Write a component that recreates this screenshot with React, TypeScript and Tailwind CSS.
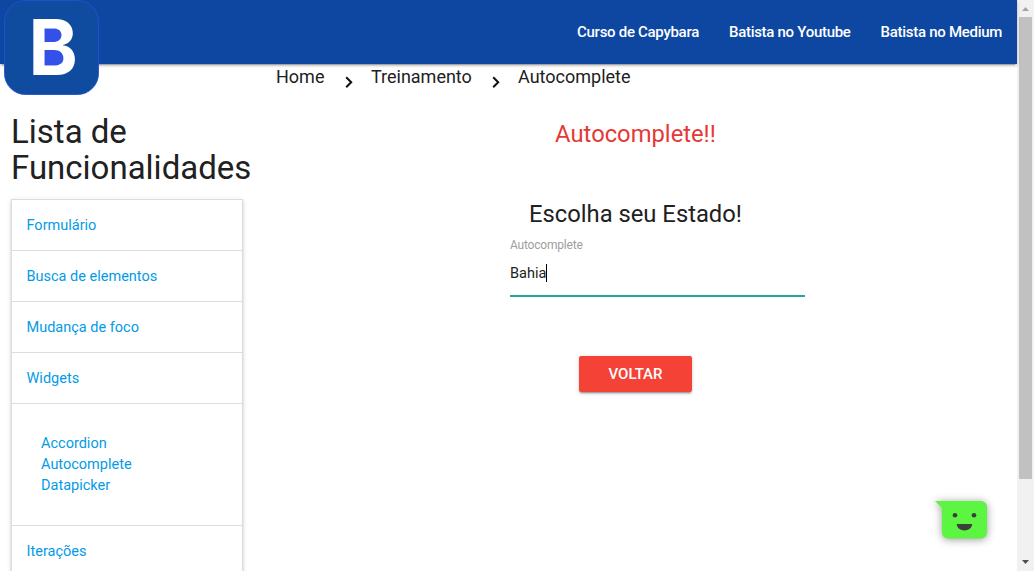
const navLinks = ['Curso de Capybara', 'Batista no Youtube', 'Batista no Medium'];
const features = ['Formulário', 'Busca de elementos', 'Mudança de foco', 'Widgets'];
const widgets = ['Accordion', 'Autocomplete', 'Datapicker'];

function Logo() {
  return (
    <svg className="absolute top-0 left-1 z-20" width="96" height="96" viewBox="0 0 96 96" role="img" aria-label="Batista">
      <rect x="0.5" y="0.5" width="94" height="94" rx="21" fill="#0f4c9f" stroke="#264fd2" strokeWidth="0.9" />
      <rect x="37" y="26" width="23" height="16" fill="#3350e8" />
      <rect x="37" y="49" width="25" height="18" fill="#3350e8" />
      <text x="24.4" y="75.4" fill="#fff" fontFamily="Inter" fontWeight="700" fontSize="77.5" textLength="49" lengthAdjust="spacingAndGlyphs">B</text>
    </svg>
  );
}

function Chevron() {
  return (
    <svg className="mt-3 h-3 w-2" viewBox="0 0 8 12" fill="none" stroke="#111" strokeWidth="2">
      <path d="M1.2 1.2 6.2 6.2 1.2 11.2" />
    </svg>
  );
}

function Scrollbar() {
  return (
    <div className="flex h-full w-[17px] shrink-0 flex-col items-center bg-[#f1f1f1]">
      <svg className="h-[17px] w-[17px]" viewBox="0 0 17 17"><path d="M5 11 8.5 7 12 11Z" fill="#a3a3a3" /></svg>
      <div className="h-[462px] w-[13px] bg-[#c1c1c1]" />
      <svg className="mt-auto h-[17px] w-[17px]" viewBox="0 0 17 17"><path d="M5 6 12 6 8.5 10Z" fill="#505050" /></svg>
    </div>
  );
}

function ChatBubble() {
  return (
    <svg className="absolute top-[489px] left-[925px] drop-shadow-[0_1px_4px_rgba(0,0,0,0.4)]" width="76" height="64" viewBox="0 0 76 64">
      <path d="M10 12H56a6 6 0 0 1 6 6V43.5a6 6 0 0 1-6 6H23a6 6 0 0 1-6-6V19Z" fill="#5bf542" />
      <circle cx="30" cy="26.3" r="2.3" fill="#3b4039" />
      <circle cx="49" cy="26.3" r="2.3" fill="#3b4039" />
      <path d="M31.7 35H47.2C46.7 43.5 32.2 43.5 31.7 35Z" fill="#3b4039" />
    </svg>
  );
}

export default function App() {
  return (
    <div className="relative flex h-screen w-full overflow-hidden bg-white font-['Roboto',sans-serif] text-[14.5px] text-[#212121]">
      <div className="flex min-w-0 flex-1 flex-col">
        <nav className="relative z-10 flex h-16 shrink-0 items-center justify-end gap-[30px] bg-[#0d47a1] pr-[15px] text-[15px] font-medium tracking-[-0.29px] text-white shadow-[0_2px_2px_0_rgba(0,0,0,0.14),0_1px_5px_0_rgba(0,0,0,0.12),0_3px_1px_-2px_rgba(0,0,0,0.2)]">
          <Logo />
          {navLinks.map((label) => (
            <a key={label} className="whitespace-nowrap">{label}</a>
          ))}
        </nav>
        <div className="flex min-h-0 flex-1">
          <aside className="w-[254px] shrink-0 pt-[50px] pl-[11px]">
            <h4 className="w-[243px] text-[33px] leading-9">Lista de Funcionalidades</h4>
            <ul className="mt-[13px] h-[450px] w-[232px] border border-[#ddd] text-[#039be5] shadow-[0_2px_2px_0_rgba(0,0,0,0.14),0_1px_5px_0_rgba(0,0,0,0.12),0_3px_1px_-2px_rgba(0,0,0,0.2)]">
              {features.map((label) => (
                <li key={label} className="flex h-[51px] items-center border-b border-[#ddd] pt-px pl-[14.5px]">{label}</li>
              ))}
              <li className="flex h-[122px] flex-col justify-center border-b border-[#ddd] pl-[29px] leading-[21px]">
                {widgets.map((label) => (
                  <a key={label}>{label}</a>
                ))}
              </li>
              <li className="flex h-[51px] items-center pl-[14.5px]">Iterações</li>
            </ul>
          </aside>
          <main className="flex min-w-0 flex-1 flex-col items-start">
            <div className="flex h-[27px] items-start pl-[22px] text-[18px] leading-[26px]">
              <span className="w-12">Home</span>
              <span className="mr-[18px] ml-[21px]"><Chevron /></span>
              <span className="w-[101px] tracking-[-0.01px]">Treinamento</span>
              <span className="mr-[18px] ml-5"><Chevron /></span>
              <span>Autocomplete</span>
            </div>
            <h5 className="mt-7 w-[763px] text-center text-[23.78px] leading-[30px] text-[#e53935]">Autocomplete!!</h5>
            <h5 className="mt-[50px] w-[763px] text-center text-[23.78px] leading-[30px]">Escolha seu Estado!</h5>
            <div className="ml-64 flex h-[68px] w-[295px] flex-col border-b-2 border-[#26a69a]">
              <label className="mt-2 text-[12px] leading-4 tracking-[-0.2px] text-[#9e9e9e]">Autocomplete</label>
              <div className="mt-[11px] flex h-[18px] items-center">
                <span className="pt-px">Bahia</span>
                <span className="h-[18px] w-px bg-black" />
              </div>
            </div>
            <button className="mt-[59px] ml-[325px] h-9 w-[113px] rounded-[2px] bg-[#f44336] text-[15px] font-medium text-white uppercase shadow-[0_2px_2px_0_rgba(0,0,0,0.14),0_1px_5px_0_rgba(0,0,0,0.12),0_3px_1px_-2px_rgba(0,0,0,0.2)]">Voltar</button>
          </main>
        </div>
      </div>
      <Scrollbar />
      <ChatBubble />
    </div>
  );
}
